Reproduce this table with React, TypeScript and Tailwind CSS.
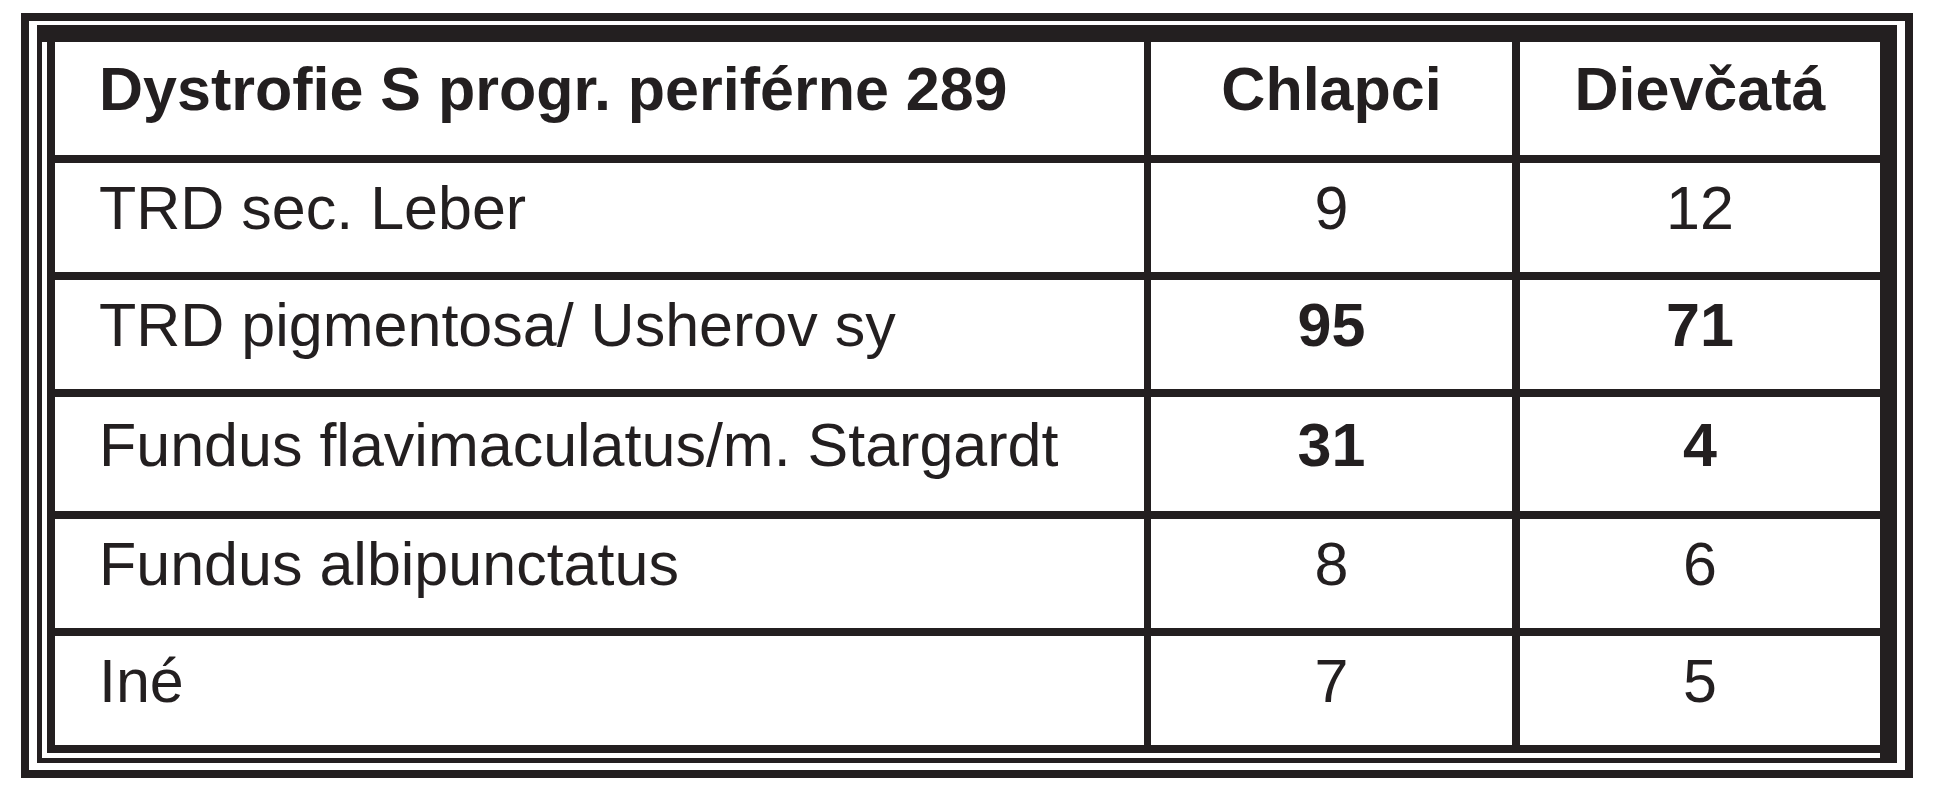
import React from 'react';

type Row = {
  label: string;
  boys: string;
  girls: string;
  bold?: boolean;
  height: string;
};

const rows: Row[] = [
  { label: 'TRD sec. Leber', boys: '9', girls: '12', height: 'h-[117px]' },
  { label: 'TRD pigmentosa/ Usherov sy', boys: '95', girls: '71', bold: true, height: 'h-[117px]' },
  { label: 'Fundus flavimaculatus/m. Stargardt', boys: '31', girls: '4', bold: true, height: 'h-[122px]' },
  { label: 'Fundus albipunctatus', boys: '8', girls: '6', height: 'h-[117px]' },
  { label: 'Iné', boys: '7', girls: '5', height: 'h-[117px]' },
];

export default function App() {
  return (
    <div
      className="w-[1935px] h-[800px] bg-white pt-[13px] pl-[21px] text-[#231f20]"
      style={{ fontFamily: '"Liberation Sans", Arial, sans-serif' }}
    >
      {/* outer frame */}
      <div className="w-[1892px] h-[765px] border-8 border-[#231f20] pt-[4px] pl-[8px] pr-[8px] pb-[7px]">
        {/* inner double frame */}
        <div className="border-l-[5px] border-t-[17px] border-r-[17px] border-b-[5px] border-[#231f20] pl-[5px] pb-[5px]">
          <div className="border-l-8 border-[#231f20] text-[61px] leading-none">
            {/* header */}
            <div className="flex h-[121px] border-b-8 border-[#231f20] font-bold">
              <div className="w-[1096px] border-r-[7px] border-[#231f20] flex items-center pl-[44px] pb-[18px]">
                Dystrofie S progr. periférne 289
              </div>
              <div className="w-[369px] border-r-8 border-[#231f20] flex items-center justify-center pb-[18px]">
                Chlapci
              </div>
              <div className="w-[360px] flex items-center justify-center pb-[18px]">Dievčatá</div>
            </div>

            {rows.map((r) => (
              <div key={r.label} className={`flex ${r.height} border-b-8 border-[#231f20]`}>
                <div className="w-[1096px] border-r-[7px] border-[#231f20] flex items-center pl-[44px] pb-[18px]">
                  {r.label}
                </div>
                <div
                  className={`w-[369px] border-r-8 border-[#231f20] flex items-center justify-center pb-[18px] ${
                    r.bold ? 'font-bold' : ''
                  }`}
                >
                  {r.boys}
                </div>
                <div className={`w-[360px] flex items-center justify-center pb-[18px] ${r.bold ? 'font-bold' : ''}`}>
                  {r.girls}
                </div>
              </div>
            ))}
          </div>
        </div>
      </div>
    </div>
  );
}
